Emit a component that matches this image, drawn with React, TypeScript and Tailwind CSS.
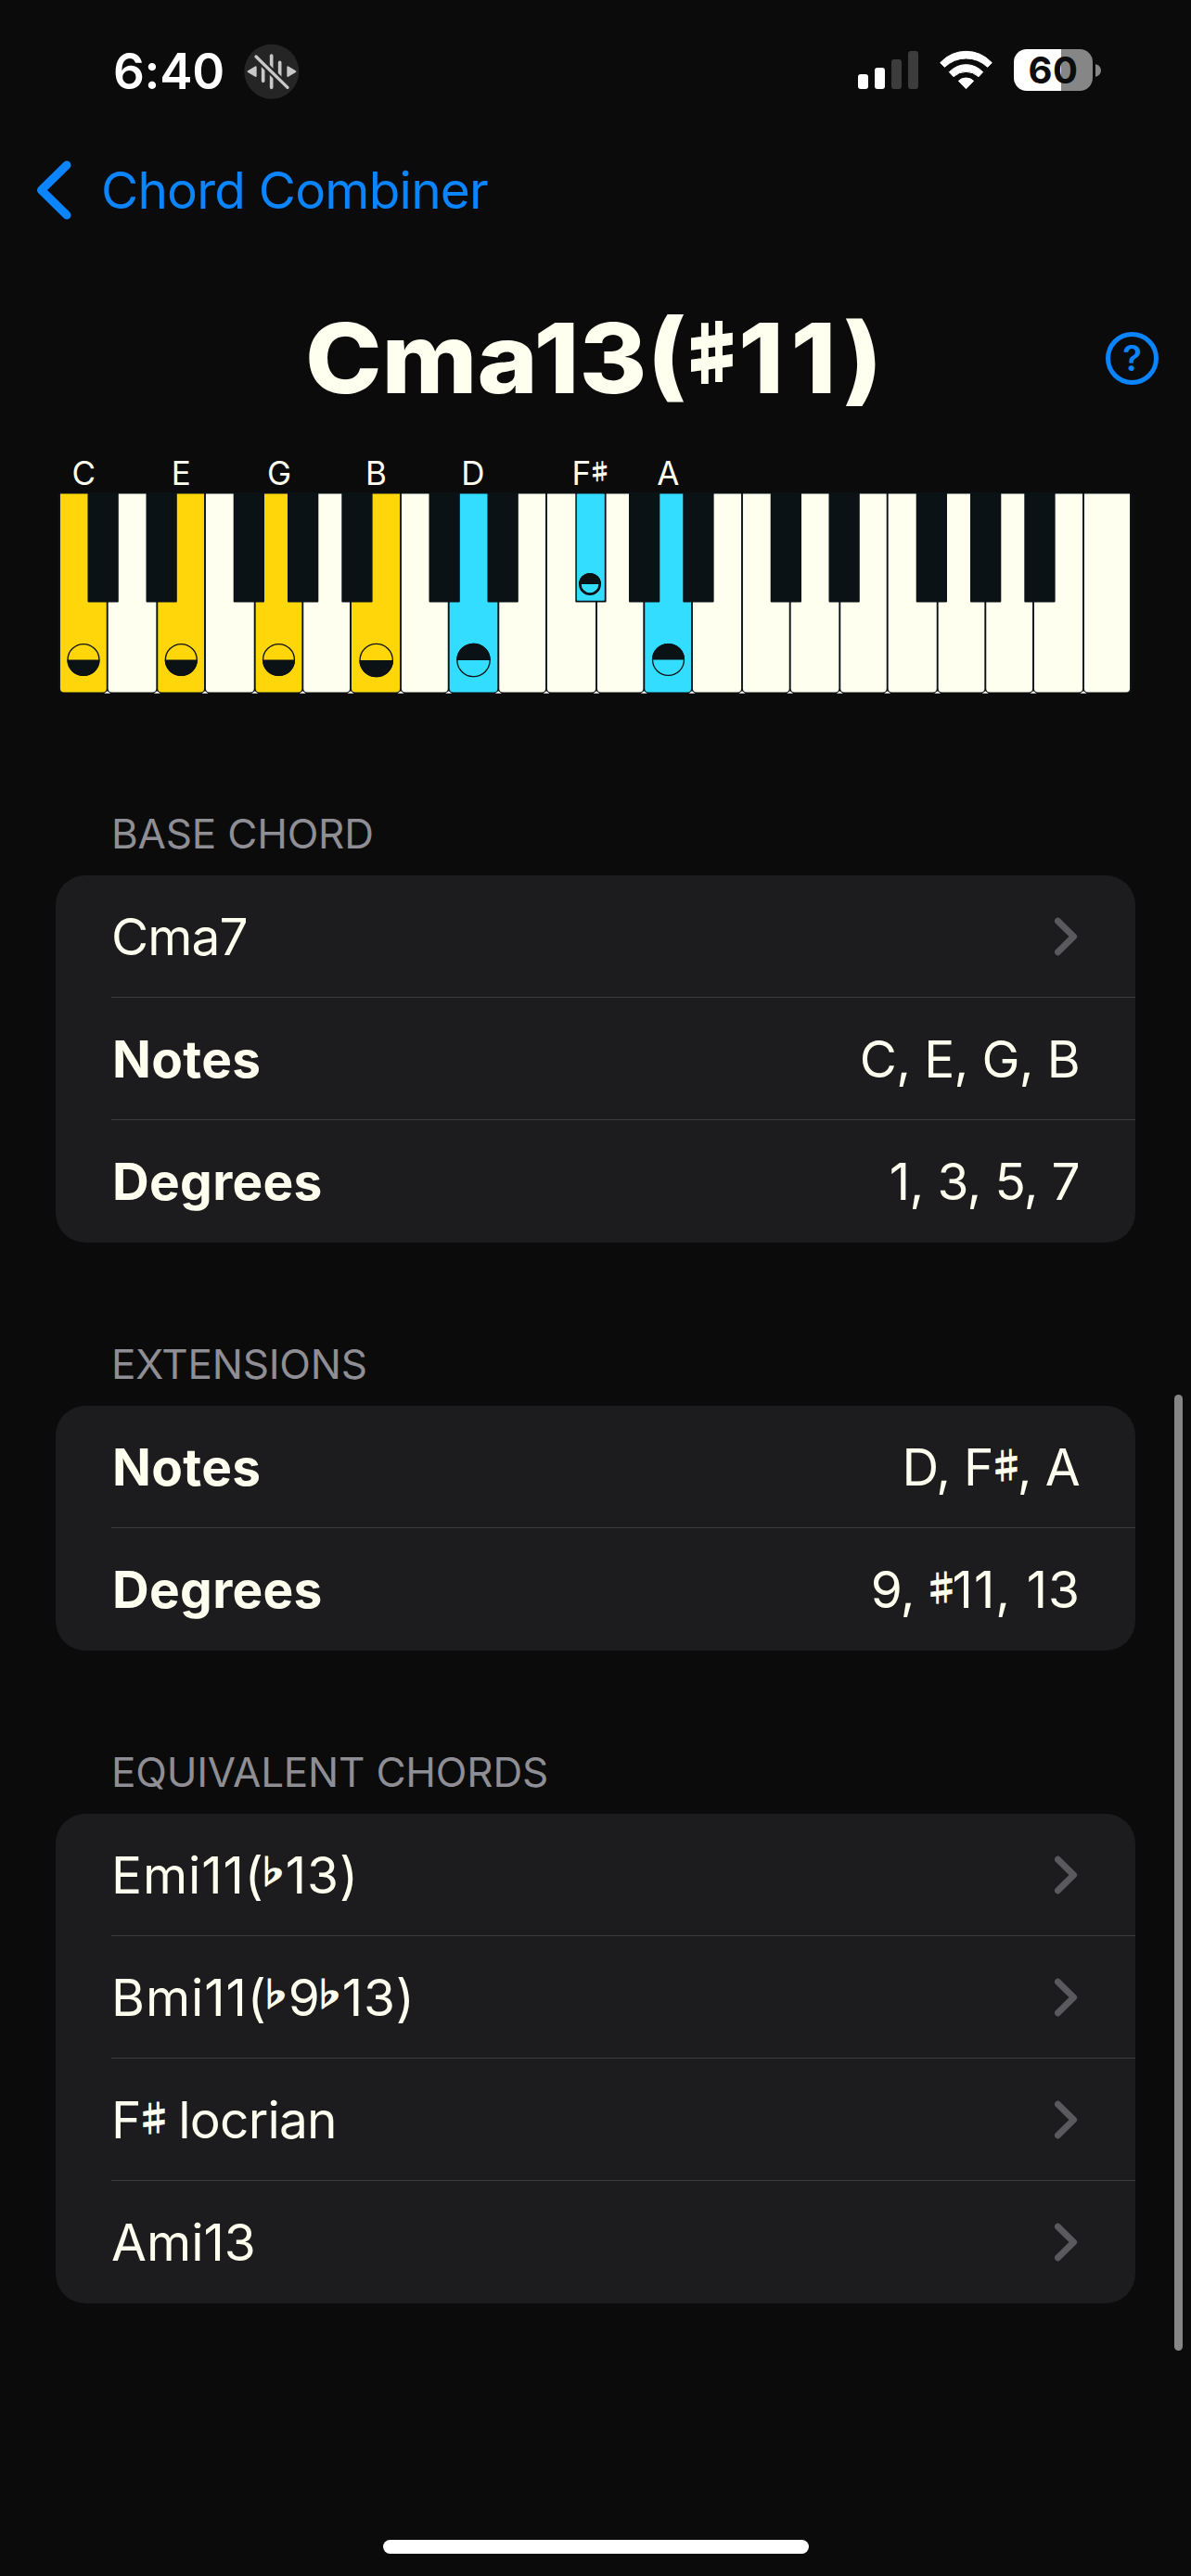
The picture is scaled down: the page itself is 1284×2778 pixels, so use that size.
import type { ReactNode } from "react";

const INK = "#0a1215";
const IVORY = "#fffff0";
const GOLD = "#ffd60a";
const CYAN = "#33ddff";

/* ---------- accidentals ---------- */

function Sharp() {
  return (
    <span className="relative -top-[8px] -mr-[7px] -ml-[5px] inline-block w-[38px] scale-x-[1.15] font-['Noto_Sans_CJK_JP',sans-serif] text-[38px] leading-none font-bold tracking-normal [-webkit-text-stroke:0.8px_currentColor]">
      ♯
    </span>
  );
}

function Flat() {
  return (
    <span className="relative -top-[11px] -mr-[2px] -ml-[9px] inline-block w-[34px] scale-x-[1.2] font-['Noto_Sans_CJK_JP',sans-serif] text-[34px] leading-none font-bold tracking-normal [-webkit-text-stroke:1.4px_currentColor]">
      ♭
    </span>
  );
}

/* ---------- status bar ---------- */

function MuteBadge() {
  return (
    <svg className="ml-[21px] h-[60px] w-[60px]" viewBox="38 25 180 180">
      <circle cx="127.500" cy="115.500" r="88.500" fill="#252525" />
      <g stroke="#c8c8c8" strokeWidth="11" strokeLinecap="round">
        <path d="M100 86V146M127 64V167M154 86V146" />
      </g>
      <path d="M77 67L179 167" stroke="#252525" strokeWidth="23" />
      <path d="M77 67L179 167" stroke="#c8c8c8" strokeWidth="10" strokeLinecap="round" />
      <g fill="#c8c8c8" stroke="#c8c8c8" strokeWidth="6" strokeLinejoin="round">
        <path d="M52 115.500L76 101V130Z" />
        <path d="M204 115.500L180 101V130Z" />
      </g>
    </svg>
  );
}

function Signal() {
  return (
    <div className="flex h-[41px] items-end gap-[7px]">
      <div className="h-4 w-[11px] rounded-[3px] bg-white" />
      <div className="h-[23px] w-[11px] rounded-[3px] bg-white" />
      <div className="h-8 w-[11px] rounded-[3px] bg-[#3c3c3c]" />
      <div className="h-[41px] w-[11px] rounded-[3px] bg-[#3c3c3c]" />
    </div>
  );
}

function Wifi() {
  return (
    <svg className="ml-[22px] h-[43px] w-[60px]" viewBox="384 70 180 129">
      <g fill="#fff" stroke="#fff" strokeWidth="3" strokeLinejoin="round">
        <path d="M389 111Q424 74 472.500 74T556 111L542 125Q512 97 472.500 97T403 125Z" />
        <path d="M418 141Q442 117 472.500 117T527 141L513 156Q495 140 472.500 140T432 156Z" />
        <path d="M448 170Q458 160 472.500 160T497 170L472.500 195Z" />
      </g>
    </svg>
  );
}

function Battery() {
  return (
    <div className="ml-[21px] flex items-center">
      <div className="flex h-[45px] w-[85px] items-center justify-center rounded-[14px] bg-linear-to-r from-white from-60% to-[#868686] to-60%">
        <span className="text-[40px] leading-none font-bold tracking-[0.5px] text-[#0c0c0c]">60</span>
      </div>
      <svg className="ml-[3px] h-[14px] w-[6px]" viewBox="0 0 6 14">
        <path d="M0 0Q6 2 6 7T0 14Z" fill="#868686" />
      </svg>
    </div>
  );
}

function StatusBar() {
  return (
    <header className="flex h-[154px] items-center justify-between pr-[97px] pl-[122px]">
      <div className="flex items-center text-white">
        <span className="text-[53px] leading-none font-semibold tracking-[-0.3px]">6:40</span>
        <MuteBadge />
      </div>
      <div className="-mt-[3px] flex items-center">
        <Signal />
        <Wifi />
        <Battery />
      </div>
    </header>
  );
}

/* ---------- keyboard ---------- */

const EDGES = [
  64, 115.7, 169.3, 221, 274.7, 326.3, 378, 432, 483.7, 537.3, 589, 643, 694.3, 746, 800, 851.7, 905.3, 956.7, 1010.7,
  1062.3, 1114, 1168, 1219,
];
const FILLS: Record<number, string> = { 0: GOLD, 2: GOLD, 4: GOLD, 6: GOLD, 8: CYAN, 12: CYAN };
const BLACKS = [
  94.5, 157.5, 251.7, 310, 368.3, 462.5, 525.5, 620.3, 678, 736.3, 830.7, 893.5, 987.7, 1046, 1104.3,
];
const MARKED_BLACK = 7;
const LABELS: [number, string][] = [
  [90.3, "C"],
  [195.3, "E"],
  [301, "G"],
  [405.5, "B"],
  [510, "D"],
  [720.3, "A"],
];

type DiscProps = { cx: number; cy: number; r: number; top: boolean; stroke?: number };

function HalfDisc({ cx, cy, r, top, stroke = 1.3 }: DiscProps) {
  return (
    <g>
      <circle cx={cx} cy={cy} r={r - stroke / 2} fill="none" stroke={INK} strokeWidth={stroke} />
      <path d={`M${cx - r} ${cy}A${r} ${r} 0 0 ${top ? 1 : 0} ${cx + r} ${cy}Z`} fill={INK} />
    </g>
  );
}

function Piano() {
  return (
    <svg className="block h-[280px] w-[1284px]" viewBox="0 0 1284 280">
      <g fill={IVORY} fontSize="35" fontFamily="Inter, sans-serif">
        {LABELS.map(([x, t]) => (
          <text key={t} x={x} y="39" textAnchor="middle">
            {t}
          </text>
        ))}
        <text x="616.500" y="39">
          F
        </text>
        <text
          transform="translate(632.5 33.4) scale(1.18 1)"
          fontSize="24"
          fontWeight="700"
          fontFamily="'Noto Sans CJK JP', sans-serif"
          stroke={IVORY}
          strokeWidth="0.500"
        >
          ♯
        </text>
      </g>
      <rect x="62.500" y="47" width="1158" height="216.500" rx="4" fill={INK} />
      {EDGES.slice(0, -1).map((x, i) => {
        const l = x + 0.95;
        const r = EDGES[i + 1] - 0.95;
        return (
          <path
            key={x}
            d={`M${l} 48.500H${r}V258.500Q${r} 262.500 ${r - 4} 262.500H${l + 4}Q${l} 262.500 ${l} 258.500Z`}
            fill={FILLS[i] ?? IVORY}
          />
        );
      })}
      {EDGES.slice(1, -1).map((x) => (
        <path key={x} d={`M${x} 261.300L${x + 3.5} 263.800H${x - 3.5}Z`} fill="#fff" />
      ))}
      {BLACKS.map((x) => (
        <rect key={x} x={x} y="47.500" width="33.300" height="118" rx="1" fill={INK} />
      ))}
      <rect x={BLACKS[MARKED_BLACK] + 1.5} y="48.500" width="30" height="115.300" rx="1" fill={CYAN} />
      {[90, 195.3, 300.5].map((cx) => (
        <HalfDisc key={cx} cx={cx} cy={227.5} r={17.6} top={false} />
      ))}
      <HalfDisc cx={405.7} cy={228} r={18.3} top={false} />
      <HalfDisc cx={510.5} cy={228} r={18.3} top />
      <HalfDisc cx={720.5} cy={227.5} r={17.6} top />
      <HalfDisc cx={636} cy={146} r={12} top stroke={2.7} />
    </svg>
  );
}

/* ---------- list ---------- */

function Chevron() {
  return (
    <svg className="mr-px h-[42px] w-[26px]" viewBox="0 0 26 42" fill="none">
      <path
        d="M3.500 4.300L20.500 21L3.500 37.700"
        stroke="#5a5a5e"
        strokeWidth="7"
        strokeLinecap="round"
        strokeLinejoin="round"
      />
    </svg>
  );
}

function Row({ children }: { children: ReactNode }) {
  return (
    <div className="relative flex h-[132px] items-center justify-between px-[60px] whitespace-nowrap not-last:after:absolute not-last:after:right-0 not-last:after:bottom-0 not-last:after:left-[60px] not-last:after:h-px not-last:after:bg-[#3d3d40]">
      {children}
    </div>
  );
}

function Link({ children }: { children: ReactNode }) {
  return (
    <Row>
      <span>{children}</span>
      <Chevron />
    </Row>
  );
}

function Fact({ name, children }: { name: string; children: ReactNode }) {
  return (
    <Row>
      <span className="ml-px font-bold tracking-[0.3px]">{name}</span>
      <span className="tracking-[-0.7px]">{children}</span>
    </Row>
  );
}

function Section({ title, children }: { title: string; children: ReactNode }) {
  return (
    <section className="mb-[86px]">
      <h2 className="flex h-[90px] items-center pl-[120px] text-[44px] leading-none tracking-[-0.2px] text-[#8f8e94]">
        {title}
      </h2>
      <div className="mx-[60px] rounded-[32px] bg-[#1c1c1e] text-[55px] leading-none">{children}</div>
    </section>
  );
}

export default function App() {
  return (
    <div className="relative flex h-[2778px] w-[1284px] flex-col overflow-hidden bg-[#0b0b0b] font-['Inter',sans-serif] text-[#fffff0]">
      <StatusBar />
      <nav className="flex h-[102px] items-center pl-[38px] text-[#0a84ff]">
        <svg className="h-[66px] w-[42px]" viewBox="0 0 42 66" fill="none">
          <path
            d="M34 6L6.500 33L34 60"
            stroke="currentColor"
            strokeWidth="9"
            strokeLinecap="round"
            strokeLinejoin="round"
          />
        </svg>
        <span className="ml-[29px] text-[55px] leading-none tracking-[-0.8px]">Chord Combiner</span>
      </nav>
      <div className="mt-8 flex h-[196px] items-center">
        <h1 className="ml-[329px] flex w-[863px] items-baseline text-[104px] leading-none font-extrabold whitespace-nowrap">
          <span className="w-[411px] origin-left scale-x-[1.068]">Cma13(</span>
          <span className="relative -top-[17px] -mr-[9px] -ml-[7px] w-[72px] scale-x-[1.15] font-['Noto_Sans_CJK_JP',sans-serif] text-[70px] leading-none [-webkit-text-stroke:4px_currentColor]">
            ♯
          </span>
          <span className="origin-left scale-x-[1.068] tracking-[7px] [font-kerning:none]">11)</span>
        </h1>
        <div className="flex h-[57px] w-[57px] items-center justify-center rounded-full border-[5px] border-[#0a84ff] text-[38px] leading-none font-semibold text-[#0a84ff]">
          ?
        </div>
      </div>
      <Piano />
      <main className="mt-[90px]">
        <Section title="BASE CHORD">
          <Link>
            <span className="tracking-[-0.9px]">Cma7</span>
          </Link>
          <Fact name="Notes">C, E, G, B</Fact>
          <Fact name="Degrees">1, 3, 5, 7</Fact>
        </Section>
        <Section title="EXTENSIONS">
          <Fact name="Notes">
            D, F<Sharp />, A
          </Fact>
          <Fact name="Degrees">
            9, <Sharp />
            <span className="-mr-px tracking-[1px]">11, 13</span>
          </Fact>
        </Section>
        <Section title="EQUIVALENT CHORDS">
          <Link>
            <span className="tracking-[0.9px]">
              Emi11(
              <Flat />
              13)
            </span>
          </Link>
          <Link>
            <span className="tracking-[0.9px]">
              Bmi11(
              <Flat />9<Flat />
              13)
            </span>
          </Link>
          <Link>
            <span className="tracking-[-0.8px]">
              F<Sharp /> locrian
            </span>
          </Link>
          <Link>Ami13</Link>
        </Section>
      </main>
      <div className="absolute top-[1504px] right-[9px] h-[1031px] w-[9px] rounded-full bg-[#868686]" />
      <div className="absolute top-[2739px] left-[413px] h-[15px] w-[459px] rounded-full bg-white" />
    </div>
  );
}
